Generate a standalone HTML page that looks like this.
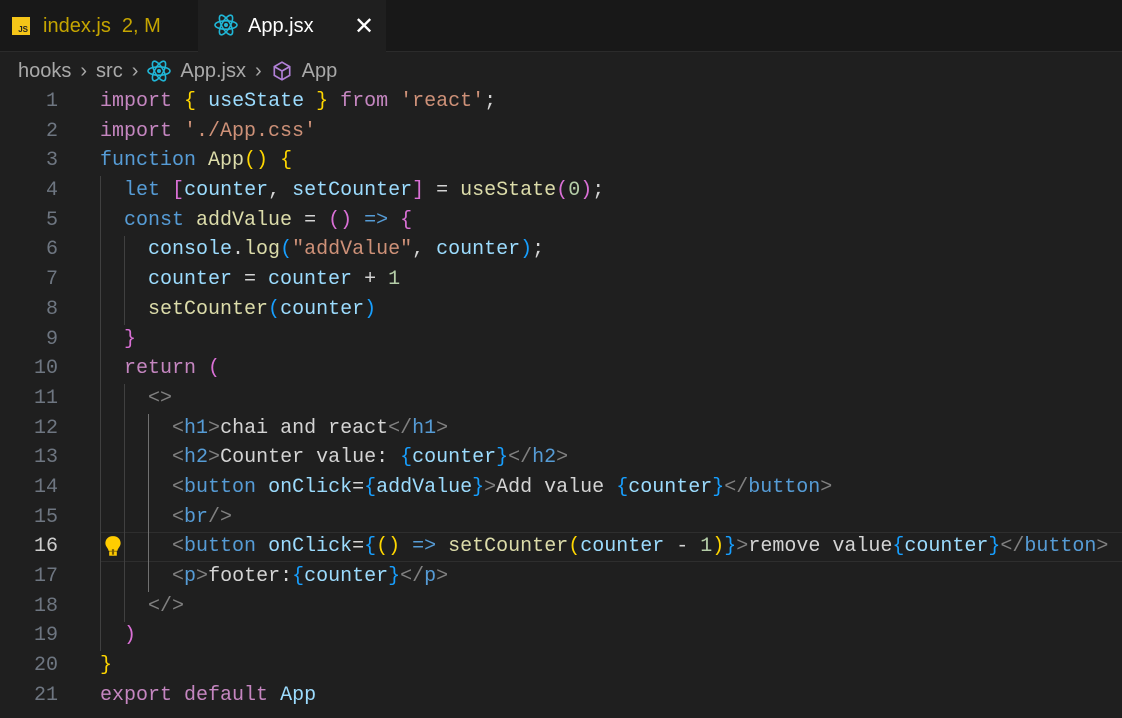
<!DOCTYPE html><html><head><style>
body{margin:0;width:1122px;height:718px;background:#1f1f1f;overflow:hidden;font-family:"Liberation Sans",sans-serif;position:relative}
.tabs{position:absolute;left:0;top:0;width:1122px;height:51px;background:#181818;border-bottom:1px solid #2b2b2b}
.tab{position:absolute;top:0;height:52px;display:flex;align-items:center;font-size:20px}
.bc{position:absolute;top:56px;left:18px;font-size:20px;color:#a9a9a9;display:flex;align-items:center;gap:9px;height:30px}
.code{position:absolute;top:87px;left:0;font-family:"Liberation Mono",monospace;font-size:20px}
.l{height:29.7px;line-height:29.7px;white-space:pre;position:relative;width:1122px}
.n{position:absolute;top:0;left:0;width:58px;text-align:right;color:#6e7681}
.t{position:absolute;top:0;left:100px;color:#d4d4d4}
.cur{border-top:1px solid #2e2e2e;border-bottom:1px solid #2e2e2e;box-sizing:border-box}
.k{color:#c586c0}.b{color:#569cd6}.v{color:#9cdcfe}.f{color:#dcdcaa}.s{color:#ce9178}.m{color:#b5cea8}
.y{color:#ffd700}.p{color:#da70d6}.c{color:#179fff}.g{color:#808080}
.ig{position:absolute;width:1px;background:#404040;z-index:1}
</style></head><body>
<div class="tabs">
 <div class="tab" style="left:0;width:197px">
  <div style="position:absolute;left:12px;top:17px;width:18px;height:18px;background:#f5c518;color:#222;font-size:8px;font-weight:bold;display:flex;align-items:flex-end;justify-content:flex-end;padding:0 2px 1px 0;box-sizing:border-box">JS</div>
  <span style="position:absolute;left:43px;color:#c5a500">index.js&nbsp; 2, M</span></div>
 <div class="tab" style="left:198px;width:188px;background:#1f1f1f;height:52px">
  <svg style="position:absolute;left:16px;top:14px" width="24" height="22" viewBox="-12 -11 24 22"><g fill="none" stroke="#20b6d6" stroke-width="1.6"><ellipse rx="11" ry="4.2"/><ellipse rx="11" ry="4.2" transform="rotate(60)"/><ellipse rx="11" ry="4.2" transform="rotate(120)"/></g><circle r="2" fill="#20b6d6"/></svg>
  <span style="position:absolute;left:50px;color:#fff">App.jsx</span>
  <span style="position:absolute;left:156px;color:#fff;font-size:24px">✕</span></div>
</div>
<div class="bc"><span>hooks</span><span>›</span><span>src</span><span>›</span>
<svg width="24" height="22" viewBox="-12 -11 24 22"><g fill="none" stroke="#20b6d6" stroke-width="1.6"><ellipse rx="11" ry="4.2"/><ellipse rx="11" ry="4.2" transform="rotate(60)"/><ellipse rx="11" ry="4.2" transform="rotate(120)"/></g><circle r="2" fill="#20b6d6"/></svg>
<span>App.jsx</span><span>›</span>
<svg width="22" height="22" viewBox="0 0 20 20"><g fill="none" stroke="#b180d7" stroke-width="1.5"><path d="M10 2 L17 6 L17 14 L10 18 L3 14 L3 6 Z M3 6 L10 10 L17 6 M10 10 L10 18"/></g></svg>
<span>App</span></div>
<div class="ig" style="left:100px;top:176px;height:475px"></div>
<div class="ig" style="left:124px;top:236px;height:89px"></div>
<div class="ig" style="left:124px;top:384px;height:238px"></div>
<div class="ig" style="left:148px;top:414px;height:178px;background:#707070"></div>
<div class="code">
<div class="l"><span class="n">1</span><span class="t"><span class="k">import</span> <span class="y">{</span> <span class="v">useState</span> <span class="y">}</span> <span class="k">from</span> <span class="s">'react'</span>;</span></div>
<div class="l"><span class="n">2</span><span class="t"><span class="k">import</span> <span class="s">'./App.css'</span></span></div>
<div class="l"><span class="n">3</span><span class="t"><span class="b">function</span> <span class="f">App</span><span class="y">()</span> <span class="y">{</span></span></div>
<div class="l"><span class="n">4</span><span class="t">  <span class="b">let</span> <span class="p">[</span><span class="v">counter</span>, <span class="v">setCounter</span><span class="p">]</span> = <span class="f">useState</span><span class="p">(</span><span class="m">0</span><span class="p">)</span>;</span></div>
<div class="l"><span class="n">5</span><span class="t">  <span class="b">const</span> <span class="f">addValue</span> = <span class="p">()</span> <span class="b">=&gt;</span> <span class="p">{</span></span></div>
<div class="l"><span class="n">6</span><span class="t">    <span class="v">console</span>.<span class="f">log</span><span class="c">(</span><span class="s">"addValue"</span>, <span class="v">counter</span><span class="c">)</span>;</span></div>
<div class="l"><span class="n">7</span><span class="t">    <span class="v">counter</span> = <span class="v">counter</span> + <span class="m">1</span></span></div>
<div class="l"><span class="n">8</span><span class="t">    <span class="f">setCounter</span><span class="c">(</span><span class="v">counter</span><span class="c">)</span></span></div>
<div class="l"><span class="n">9</span><span class="t">  <span class="p">}</span></span></div>
<div class="l"><span class="n">10</span><span class="t">  <span class="k">return</span> <span class="p">(</span></span></div>
<div class="l"><span class="n">11</span><span class="t">    <span class="g">&lt;&gt;</span></span></div>
<div class="l"><span class="n">12</span><span class="t">      <span class="g">&lt;</span><span class="b">h1</span><span class="g">&gt;</span>chai and react<span class="g">&lt;/</span><span class="b">h1</span><span class="g">&gt;</span></span></div>
<div class="l"><span class="n">13</span><span class="t">      <span class="g">&lt;</span><span class="b">h2</span><span class="g">&gt;</span>Counter value: <span class="c">{</span><span class="v">counter</span><span class="c">}</span><span class="g">&lt;/</span><span class="b">h2</span><span class="g">&gt;</span></span></div>
<div class="l"><span class="n">14</span><span class="t">      <span class="g">&lt;</span><span class="b">button</span> <span class="v">onClick</span>=<span class="c">{</span><span class="v">addValue</span><span class="c">}</span><span class="g">&gt;</span>Add value <span class="c">{</span><span class="v">counter</span><span class="c">}</span><span class="g">&lt;/</span><span class="b">button</span><span class="g">&gt;</span></span></div>
<div class="l"><span class="n">15</span><span class="t">      <span class="g">&lt;</span><span class="b">br</span><span class="g">/&gt;</span></span></div>
<div class="l"><div class="cur" style="position:absolute;left:100px;top:0;width:1022px;height:29.7px"></div><span class="n" style="color:#ccc">16</span><svg style="position:absolute;left:103px;top:3px;z-index:2" width="20" height="24" viewBox="0 0 18 22"><path d="M9 1 C4 1 2 4.5 2 7.5 C2 10.5 4.5 12 5 14.5 L13 14.5 C13.5 12 16 10.5 16 7.5 C16 4.5 14 1 9 1Z" fill="#ffcc00"/><rect x="5.5" y="15" width="7" height="4" fill="#ffcc00"/><rect x="8" y="13" width="2" height="5" fill="#7a5c00"/></svg><span class="t">      <span class="g">&lt;</span><span class="b">button</span> <span class="v">onClick</span>=<span class="c">{</span><span class="y">()</span> <span class="b">=&gt;</span> <span class="f">setCounter</span><span class="y">(</span><span class="v">counter</span> - <span class="m">1</span><span class="y">)</span><span class="c">}</span><span class="g">&gt;</span>remove value<span class="c">{</span><span class="v">counter</span><span class="c">}</span><span class="g">&lt;/</span><span class="b">button</span><span class="g">&gt;</span></span></div>
<div class="l"><span class="n">17</span><span class="t">      <span class="g">&lt;</span><span class="b">p</span><span class="g">&gt;</span>footer:<span class="c">{</span><span class="v">counter</span><span class="c">}</span><span class="g">&lt;/</span><span class="b">p</span><span class="g">&gt;</span></span></div>
<div class="l"><span class="n">18</span><span class="t">    <span class="g">&lt;/&gt;</span></span></div>
<div class="l"><span class="n">19</span><span class="t">  <span class="p">)</span></span></div>
<div class="l"><span class="n">20</span><span class="t"><span class="y">}</span></span></div>
<div class="l"><span class="n">21</span><span class="t"><span class="k">export</span> <span class="k">default</span> <span class="v">App</span></span></div>
</div>
</body></html>
